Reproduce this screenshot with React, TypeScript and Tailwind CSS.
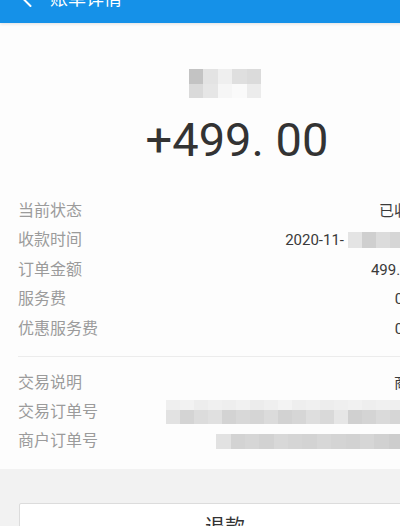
const font = "font-['Roboto','Noto_Sans_CJK_SC',sans-serif]";

// mosaic used to hide private info in the screenshot
const Mosaic = ({ rows, block = 14 }: { rows: string[][]; block?: number }) => (
  <div className="flex flex-col">
    {rows.map((row, i) => (
      <div key={i} className="flex">
        {row.map((c, j) => (
          <div key={j} style={{ backgroundColor: c, width: block, height: block }} />
        ))}
      </div>
    ))}
  </div>
);

const Bar = ({ colors, w = 14, h = 15 }: { colors: string[]; w?: number; h?: number }) => (
  <div className="flex">
    {colors.map((c, i) => (
      <div key={i} style={{ backgroundColor: c, width: w, height: h }} />
    ))}
  </div>
);

const Row = ({ label, children, tall = false }: { label: string; children?: React.ReactNode; tall?: boolean }) => (
  <div className={`flex items-center justify-between ${tall ? "h-[29.5px]" : "h-[29px]"}`}>
    <span className="text-[16px] text-[#9b9b9b]">{label}</span>
    <div className="flex items-center text-[15px] text-[#3a3a3a]">{children}</div>
  </div>
);

export default function App() {
  return (
    <div className={`w-[400px] h-[526px] overflow-hidden bg-[#f2f2f2] ${font}`}>
      <div className="w-[450px]">
        <div className="relative z-10 -mt-[27px] flex h-[50px] items-center bg-[#1591e8] shadow-[0_1px_3px_rgba(0,0,0,0.12)]">
          <svg className="ml-[21px] h-[18px] w-[11px]" viewBox="0 0 11 18" fill="none">
            <polyline points="9.5,1 1.5,9 9.5,17" stroke="white" strokeWidth="2" strokeLinecap="round" strokeLinejoin="round" />
          </svg>
          <span className="ml-[18px] text-[18px] text-white">账单详情</span>
        </div>

        <div className="bg-[#fdfdfd] px-[18px] pt-[46px] pb-[13px]">
          <div className="flex justify-center">
            <Mosaic
              rows={[
                ["#c3c3c3", "#e3e3e3", "#efefef", "#dfdfdf", "#dbdbdb"],
                ["#dadada", "#e6e6e6", "#f6f6f6", "#fafafa", "#ececec"],
              ]}
              block={14.5}
            />
          </div>
          <div className="mt-[14px] pl-[24px] text-center text-[47px] leading-[56px] text-[#333]">+499. 00</div>

          <div className="mt-[28px] flex flex-col">
            <Row label="当前状态" tall>
              <span className="mr-[8px]">已收款</span>
            </Row>
            <Row label="收款时间" tall>
              <span>2020-11-</span>
              <div className="ml-[4px]">
                <Bar colors={["#e4e4e4", "#cfcfcf", "#dcdcdc", "#d6d6d6", "#d0d0d0", "#dadada"]} h={16} />
              </div>
            </Row>
            <Row label="订单金额" tall>499.00元</Row>
            <Row label="服务费" tall>
              <span className="-mr-[7px]">0.00元</span>
            </Row>
            <Row label="优惠服务费" tall>
              <span className="-mr-[7px]">0.00元</span>
            </Row>
          </div>

          <div className="mt-[12px] -mr-[18px] h-px bg-[#ececec]" />

          <div className="mt-[12px] flex flex-col">
            <Row label="交易说明">
              <span className="-mr-[7px]">商户码</span>
            </Row>
            <Row label="交易订单号">
              <div className="flex flex-col">
                <Bar
                  colors={["#efefef", "#f2f2f2", "#ededed", "#f0f0f0", "#eeeeee", "#f1f1f1", "#ececec", "#efefef", "#f3f3f3", "#eeeeee", "#f0f0f0", "#ededed", "#efefef", "#f1f1f1", "#eeeeee", "#f0f0f0", "#efefef", "#ededed", "#f0f0f0"]}
                  h={10}
                />
                <Bar
                  colors={["#e2e2e2", "#d4d4d4", "#dcdcdc", "#e0e0e0", "#d3d3d3", "#d8d8d8", "#d5d5d5", "#dbdbdb", "#d2d2d2", "#d6d6d6", "#dedede", "#d9d9d9", "#e6e6e6", "#d0d0d0", "#d4d4d4", "#dadada", "#d6d6d6", "#d9d9d9", "#d3d3d3"]}
                  h={14}
                />
              </div>
            </Row>
            <Row label="商户订单号">
              <Bar
                colors={["#e2e2e2", "#d3d3d3", "#d6d6d6", "#d2d2d2", "#d8d8d8", "#d5d5d5", "#d3d3d3", "#d7d7d7", "#d4d4d4", "#d2d2d2", "#d6d6d6", "#d1d1d1", "#cdcdcd", "#d4d4d4", "#d8d8d8"]}
                w={14.4}
                h={15}
              />
            </Row>
          </div>
        </div>

        <div className="px-[19px] pt-[34px]">
          <button className="flex h-[48px] w-full items-center justify-center rounded-[2px] border border-[#dcdcdc] bg-white text-[20px] text-[#333]">
            退款
          </button>
        </div>
      </div>
    </div>
  );
}
